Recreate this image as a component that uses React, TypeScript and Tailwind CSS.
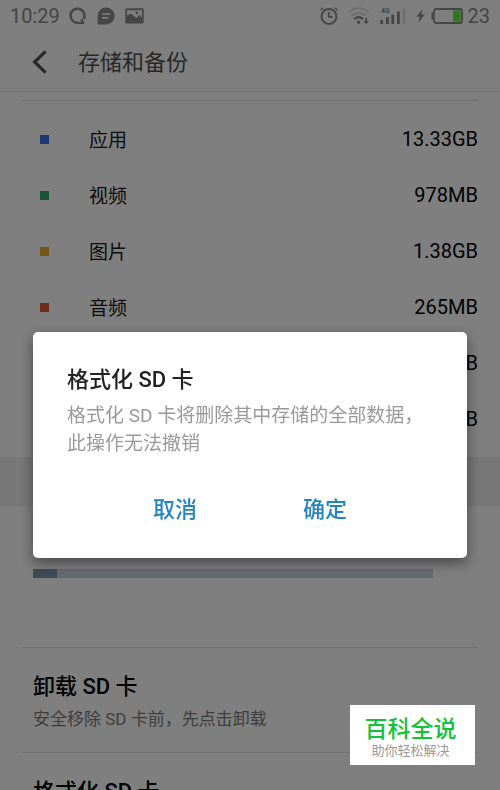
import * as React from "react";

// ---------------------------------------------------------------------------
// Data
// ---------------------------------------------------------------------------

const CATEGORIES = [
  { name: "应用", size: "13.33GB", color: "bg-[#3b6fe0]" },
  { name: "视频", size: "978MB", color: "bg-[#35a867]" },
  { name: "图片", size: "1.38GB", color: "bg-[#e2ae2c]" },
  { name: "音频", size: "265MB", color: "bg-[#dc5630]" },
  { name: "", size: "B", color: "bg-[#8a6fd0]" },
  { name: "", size: "B", color: "bg-[#b0b0b0]" },
];

const SD_USED = 6;

// ---------------------------------------------------------------------------
// Status bar icons
// ---------------------------------------------------------------------------

function SearchBubbleIcon() {
  return (
    <svg width="18" height="18" viewBox="0 0 18 18" fill="none" stroke="currentColor" strokeWidth="2.5">
      <path d="M9.6 15.6A7 7 0 1 1 14.6 12.2" />
      <path d="M9 16h6.2" strokeWidth="2" />
      <path d="M12.2 12.4l2 3.4" strokeWidth="2.2" />
    </svg>
  );
}

function ChatIcon() {
  return (
    <svg width="18" height="18" viewBox="0 0 18 18">
      <path d="M9.2 0.6a8.4 8.4 0 1 1 0 16.8H0.6V9.2A8.5 8.5 0 0 1 9.2 0.6z" fill="currentColor" />
      <path d="M5.2 7h8M5.2 10.8h6" stroke="#fff" strokeWidth="1.7" />
    </svg>
  );
}

function PictureIcon() {
  return (
    <svg width="19" height="16" viewBox="0 0 19 16">
      <rect x="0.3" y="0.3" width="18.4" height="15.2" rx="1.2" fill="currentColor" />
      <path d="M2 2.2h15v7.4L14.4 6.8 11.6 10 5.8 5.6 2 7.4z" fill="#fff" />
      <circle cx="11.8" cy="4.8" r="1.3" fill="currentColor" />
    </svg>
  );
}

function AlarmIcon() {
  return (
    <svg width="18" height="18" viewBox="0 0 18 18" fill="none" stroke="currentColor">
      <circle cx="9" cy="9.4" r="7.5" strokeWidth="2" />
      <path d="M8.8 5v4.8h4" strokeWidth="1.8" />
      <path d="M0.6 3.2L3.2 0.8M17.4 3.2L14.8 0.8" strokeWidth="1.4" />
    </svg>
  );
}

function WifiIcon() {
  return (
    <svg width="22" height="18" viewBox="0 0 22 18" fill="none">
      <g stroke="currentColor" strokeWidth="2">
        <path d="M0.8 5.2Q10.6 -2.8 20.4 5.2" opacity="0.3" />
        <path d="M3.7 8.7Q10.6 3 17.5 8.7" opacity="0.3" />
        <path d="M6.2 12Q10.6 8.2 15 12" />
      </g>
      <circle cx="10.6" cy="15.2" r="1.7" fill="currentColor" />
      <path d="M17.3 11h1.8v3h1.7l-2.6 3.2L15.6 14h1.7z" fill="currentColor" />
    </svg>
  );
}

function SignalIcon() {
  return (
    <svg width="26" height="18" viewBox="0 0 26 18" fill="currentColor">
      <rect x="0.3" y="13" width="2.8" height="4" />
      <rect x="6" y="10" width="2.8" height="7" />
      <rect x="11.4" y="7.6" width="2.8" height="9.4" />
      <rect x="17" y="4.4" width="2.8" height="12.6" />
      <rect x="22.6" y="1.6" width="2.8" height="15.4" opacity="0.3" />
      <text x="1" y="6" fontSize="7" fontWeight="700" fontFamily="Roboto, sans-serif">
        4G
      </text>
    </svg>
  );
}

function BoltIcon() {
  return (
    <svg width="9" height="14" viewBox="0 0 9 14" fill="currentColor">
      <path d="M6.6 0L0.4 7.8h3.4L2.2 14 8.8 5.6H5.2z" />
    </svg>
  );
}

function BatteryIcon() {
  return (
    <svg width="32" height="16" viewBox="0 0 32 16">
      <rect x="0.4" y="4.6" width="2.4" height="6.8" rx="1" fill="currentColor" />
      <rect x="3" y="1" width="28" height="14" rx="2" fill="none" stroke="currentColor" strokeWidth="1.8" />
      <rect x="22" y="2.4" width="7.6" height="11.2" fill="#5cf03c" />
    </svg>
  );
}

function StatusBar() {
  return (
    <div className="flex h-8 shrink-0 items-center px-[10px] text-[20px] leading-none text-[#8c8c8c]">
      <span>10:29</span>
      <div className="ml-[9px] flex items-center gap-[10px]">
        <SearchBubbleIcon />
        <ChatIcon />
        <PictureIcon />
      </div>
      <div className="ml-auto flex items-center">
        <AlarmIcon />
        <span className="ml-[10px]"><WifiIcon /></span>
        <span className="ml-[10px]"><SignalIcon /></span>
        <span className="ml-[10px]"><BoltIcon /></span>
        <span className="ml-[6px]"><BatteryIcon /></span>
        <span className="ml-[5px]">23</span>
      </div>
    </div>
  );
}

// ---------------------------------------------------------------------------
// Storage page
// ---------------------------------------------------------------------------

function CategoryList() {
  return (
    <ul className="mx-[22px] mt-2 border-t border-[#e2e2e2] py-[10px]">
      {CATEGORIES.map((c, i) => (
        <li key={i} className="flex h-14 items-center pl-[18px] text-[#181818]">
          <span className={`size-[9px] ${c.color}`} />
          <span className="ml-10 pt-1 text-[19px]">{c.name}</span>
          <span className="ml-auto text-[20px] text-black">{c.size}</span>
        </li>
      ))}
    </ul>
  );
}

function SettingItem({ title, note }: { title: string; note?: string }) {
  return (
    <button className="mx-[22px] flex flex-col items-start border-t border-[#e2e2e2] px-[11px] pt-[23px] pb-[21px] text-left">
      <span className="text-[22px] leading-8 font-medium text-black">{title}</span>
      {note && <span className="mt-1 text-[17px] leading-6 text-[#7c7c7c]">{note}</span>}
    </button>
  );
}

function FormatDialog({ onClose }: { onClose: () => void }) {
  return (
    <div className="fixed inset-0 flex items-center bg-black/50 px-[33px] pt-[99px]">
      <div
        role="dialog"
        aria-modal="true"
        aria-labelledby="format-title"
        className="w-full rounded-[5px] bg-white px-[34px] pt-8 pb-7 shadow-[0_5px_14px_rgba(0,0,0,0.45)]"
      >
        <h2 id="format-title" className="text-[22px] leading-8 font-medium text-[#222]">
          格式化 SD 卡
        </h2>
        <p className="mt-1.5 text-[19px] leading-7 text-[#999]">
          格式化 SD 卡将删除其中存储的全部数据，此操作无法撤销
        </p>
        <div className="mt-8 flex justify-center gap-[106px] text-[22px] leading-10 font-medium text-[#2384c0]">
          <button onClick={onClose}>取消</button>
          <button onClick={onClose}>确定</button>
        </div>
      </div>
    </div>
  );
}

export default function App() {
  const [open, setOpen] = React.useState(true);

  return (
    <div className="relative flex h-screen flex-col overflow-hidden bg-white font-[Roboto,'Noto_Sans_CJK_SC',sans-serif]">
      <StatusBar />

      <header className="flex h-[60px] shrink-0 items-center border-b border-[#e2e2e2] pl-8">
        <button aria-label="返回" className="text-[#555]">
          <svg width="16" height="24" viewBox="0 0 16 24" fill="none" stroke="currentColor" strokeWidth="3.2">
            <path d="M13.6 1.4L2.6 12l11 10.6" />
          </svg>
        </button>
        <h1 className="ml-[30px] pt-0.5 text-[22px] text-[#505050]">存储和备份</h1>
      </header>

      <main className="flex flex-col">
        <CategoryList />
        <div className="h-[49px] bg-[#f0f0f0]" />
        <div className="mt-[63px] mr-[67px] mb-[69px] ml-[33px] h-[9px] bg-[#ccd9e0]">
          <div className="h-full bg-[#7f98ac]" style={{ width: `${SD_USED}%` }} />
        </div>
        <SettingItem title="卸载 SD 卡" note="安全移除 SD 卡前，先点击卸载" />
        <SettingItem title="格式化 SD 卡" />
      </main>

      {open && <FormatDialog onClose={() => setOpen(false)} />}

      {/* Site badge */}
      <div className="absolute right-[25px] bottom-[25px] flex h-[60px] w-[125px] flex-col items-center bg-white pt-3 pr-1">
        <span className="text-[23px] leading-[26px] font-medium text-[#0fc43c]">百科全说</span>
        <span className="text-[13px] leading-4 text-[#999]">助你轻松解决</span>
      </div>
    </div>
  );
}
